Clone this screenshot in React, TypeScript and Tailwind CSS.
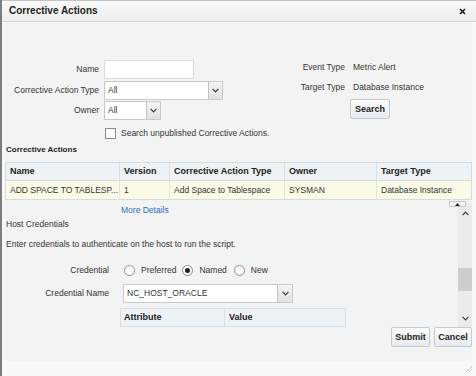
import React from "react";

const Chevron = ({ up = false }: { up?: boolean }) => (
  <svg width="7" height="5" viewBox="0 0 7 5" className="block">
    <path
      d={up ? "M0.6 4.2 L3.5 1.2 L6.4 4.2" : "M0.6 0.8 L3.5 3.8 L6.4 0.8"}
      fill="none"
      stroke="#3a3a3a"
      strokeWidth="1.2"
    />
  </svg>
);

const Select = ({ width, value, btn = 14 }: { width: string; value: string; btn?: number }) => (
  <div className={`flex h-[19px] border border-[#c9c9c9] bg-white ${width}`}>
    <span className="flex-1 flex items-center pl-[3px] text-[#333] whitespace-nowrap">{value}</span>
    <span
      className={`flex items-center justify-center border-l border-[#c2c2c2] bg-linear-to-b from-[#f4f4f4] to-[#e2e2e2] ${
        btn === 15 ? "w-[15px]" : "w-[14px]"
      }`}
    >
      <Chevron />
    </span>
  </div>
);

const Button = ({ label, width }: { label: string; width: string }) => (
  <button
    className={`h-[20px] ${width} flex items-center justify-center border border-[#c3cad1] rounded-[2px] bg-linear-to-b from-[#fbfbfb] to-[#e8ebee] text-[9px] font-bold text-[#222]`}
  >
    {label}
  </button>
);

const Radio = ({ checked = false }: { checked?: boolean }) => (
  <span className="w-[11px] h-[11px] rounded-full border border-[#8c8c8c] bg-white flex items-center justify-center shrink-0">
    {checked && <span className="w-[5px] h-[5px] rounded-full bg-[#222]" />}
  </span>
);

const columns = ["Name", "Version", "Corrective Action Type", "Owner", "Target Type"];
const row = ["ADD SPACE TO TABLESP...", "1", "Add Space to Tablespace", "SYSMAN", "Database Instance"];

export default function App() {
  return (
    <div className="w-[476px] h-[376px] overflow-hidden bg-[#f8f8f8] border-l-2 border-[#7d7d7d] flex flex-col font-['Liberation_Sans',Arial,sans-serif] text-[8.5px] text-[#333] leading-none">
      {/* title bar */}
      <div className="h-[22px] shrink-0 flex items-center justify-between pl-[7px] pr-[10px] border-t border-b border-t-[#c4c4c4] border-b-[#cfd8e0] bg-linear-to-b from-[#f8f8f8] to-[#eeeeee]">
        <span className="text-[10px] font-bold text-[#222]">Corrective Actions</span>
        <svg width="7" height="7" viewBox="0 0 7 7">
          <path d="M1 1 L6 6 M6 1 L1 6" stroke="#222" strokeWidth="1.7" />
        </svg>
      </div>

      {/* dialog body */}
      <div className="ml-[3px] mr-[4px] h-[339px] shrink-0 bg-[#f3f3f3] flex flex-col">
        {/* search form */}
        <div className="flex items-start pt-[35px]">
          <div className="w-[295px] mt-[3px]">
            <div className="grid grid-cols-[94px_auto] gap-x-[5px] gap-y-[1.5px] items-center">
              <span className="text-right">Name</span>
              <div className="w-[90px] h-[19px] border border-[#dadada] bg-white" />
              <span className="text-right whitespace-nowrap">Corrective Action Type</span>
              <Select width="w-[119px]" value="All" />
              <span className="text-right">Owner</span>
              <Select width="w-[57px]" value="All" />
            </div>
            <div className="mt-[8px] pl-[100px] flex items-center gap-[5px]">
              <span className="w-[11px] h-[11px] border border-[#8a8a8a] bg-white shrink-0" />
              <span className="whitespace-nowrap">Search unpublished Corrective Actions.</span>
            </div>
          </div>
          <div className="grid grid-cols-[45px_auto] gap-x-[8px]">
            <span className="h-[20px] flex items-center justify-end whitespace-nowrap">Event Type</span>
            <span className="h-[20px] flex items-center">Metric Alert</span>
            <span className="h-[20px] flex items-center justify-end whitespace-nowrap">Target Type</span>
            <span className="h-[20px] flex items-center whitespace-nowrap">Database Instance</span>
            <div className="col-start-2 mt-[2px] -ml-[3px]">
              <Button label="Search" width="w-[40px]" />
            </div>
          </div>
        </div>

        <div className="mt-[6px] h-[10px] flex items-center pl-[1px] text-[8px] font-bold text-[#222]">
          Corrective Actions
        </div>

        {/* results table */}
        <div className="mt-[7px] border border-[#d3dbe3]">
          <div className="grid grid-cols-[114px_50px_115px_92px_auto] h-[18px] bg-[#eef2f5] border-b border-[#d3dbe3]">
            {columns.map((c, i) => (
              <div
                key={c}
                className={`flex items-center pl-[4px] text-[9px] font-bold text-[#222] whitespace-nowrap ${
                  i < columns.length - 1 ? "border-r border-[#d8dfe6]" : ""
                }`}
              >
                {c}
              </div>
            ))}
          </div>
          <div className="grid grid-cols-[114px_50px_115px_92px_auto] h-[18px] bg-[#fafae7]">
            {row.map((c, i) => (
              <div
                key={i}
                className={`flex items-center pl-[4px] whitespace-nowrap overflow-hidden ${
                  i < row.length - 1 ? "border-r border-[#e3e6dc]" : ""
                }`}
              >
                {c}
              </div>
            ))}
          </div>
        </div>

        {/* scrolling detail region */}
        <div className="relative h-[127px] shrink-0 flex overflow-hidden">
          <div className="flex-1 pt-[5px]">
            <div className="h-[10px] flex items-center pl-[116px] text-[#2a6ebb]">More Details</div>
            <div className="mt-[4px] h-[10px] flex items-center pl-[1px]">Host Credentials</div>
            <div className="mt-[10px] h-[10px] flex items-center pl-[1px]">
              Enter credentials to authenticate on the host to run the script.
            </div>
            <div className="mt-[12px] grid grid-cols-[104px_auto] gap-x-[14px] gap-y-[4px] items-center">
              <span className="text-right h-[19px] flex items-center justify-end">Credential</span>
              <div className="flex items-center h-[19px] pl-[1px]">
                <Radio />
                <span className="ml-[6px]">Preferred</span>
                <span className="ml-[6px]">
                  <Radio checked />
                </span>
                <span className="ml-[6px]">Named</span>
                <span className="ml-[7px]">
                  <Radio />
                </span>
                <span className="ml-[6px]">New</span>
              </div>
              <span className="text-right whitespace-nowrap">Credential Name</span>
              <Select width="w-[170px]" value="NC_HOST_ORACLE" btn={15} />
            </div>
            <div className="mt-[5px] ml-[115px] w-[226px] h-[19px] grid grid-cols-[104px_auto] border border-[#d6dee6] bg-[#eef2f5]">
              <span className="flex items-center pl-[3px] border-r border-[#d6dee6] text-[9px] font-bold text-[#222]">
                Attribute
              </span>
              <span className="flex items-center pl-[4px] text-[9px] font-bold text-[#222]">Value</span>
            </div>
          </div>

          {/* scrollbar */}
          <div className="w-[14px] mt-[3px] bg-[#ebebeb] flex flex-col items-center">
            <div className="mt-[8px]">
              <Chevron up />
            </div>
            <div className="mt-[52px] w-full h-[23px] bg-[#cdcdcd]" />
            <div className="mt-[25px]">
              <Chevron />
            </div>
          </div>

          {/* splitter tab */}
          <div className="absolute top-[1px] right-[6px] w-[17px] h-[6px] rounded-[1px] border border-[#c8c8c8] bg-[#f2f2f2] flex items-center justify-center">
            <svg width="5" height="3" viewBox="0 0 5 3">
              <path d="M0 3 L2.5 0 L5 3 Z" fill="#222" />
            </svg>
          </div>
        </div>

        <div className="flex justify-end gap-[4px]">
          <Button label="Submit" width="w-[39px]" />
          <Button label="Cancel" width="w-[38px]" />
        </div>
      </div>

      {/* resize grip */}
      <div className="flex-1 flex justify-end items-end pr-[4px] pb-[4px]">
        <svg width="7" height="7" viewBox="0 0 7 7">
          <path d="M7 1 L1 7 M7 4 L4 7" stroke="#c4c4c4" strokeWidth="1" />
        </svg>
      </div>
    </div>
  );
}
